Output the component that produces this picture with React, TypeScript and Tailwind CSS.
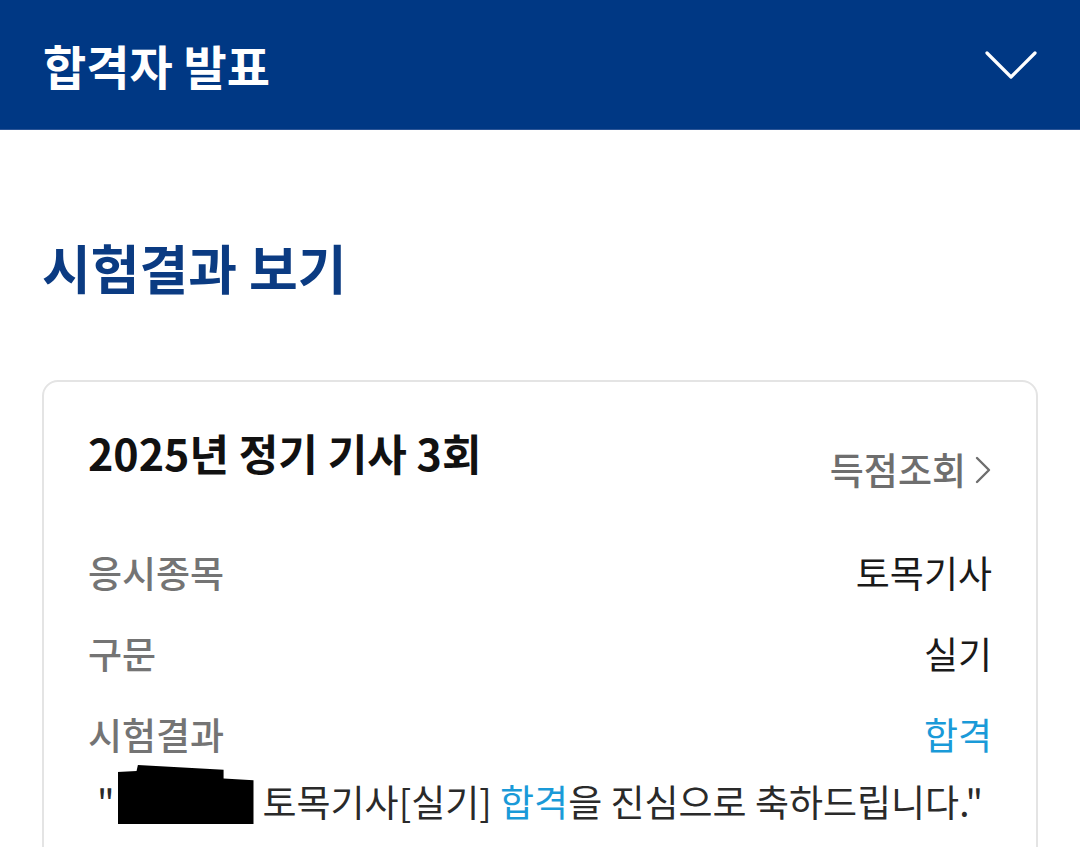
const FONT = "font-['Noto_Sans_CJK_KR','Noto_Sans',sans-serif]";

const Row = ({ label, value, blue }: { label: string; value: string; blue?: boolean }) => (
  <div className="flex h-[81px] items-center justify-between">
    <span className="text-[37px] font-medium text-[#747474]">{label}</span>
    <span className={`text-[37px] ${blue ? "text-[#1a9ad8]" : "text-[#1a1a1a]"}`}>{value}</span>
  </div>
);

export default function App() {
  return (
    <div className={`h-[847px] w-[1080px] overflow-hidden bg-white ${FONT}`}>
      <header className="flex h-[130px] items-center justify-between border-b border-[#2c5596] bg-[#003884] pl-[43px] pr-[42px]">
        <h1 className="text-[47px] font-bold leading-none text-white">합격자 발표</h1>
        <svg width="54" height="30" viewBox="0 0 54 30" fill="none">
          <path d="M3 3 L27 27 L51 3" stroke="white" strokeWidth="3.2" strokeLinecap="round" strokeLinejoin="round" />
        </svg>
      </header>

      <div className="px-[42px]">
        <h2 className="pt-[111px] text-[53px] font-bold leading-none text-[#0b3b82]">시험결과 보기</h2>

        <div className="mt-[86px] h-[500px] rounded-[16px] border-2 border-[#e4e4e4] px-[44px] pt-[49px]">
          <div className="flex items-end justify-between">
            <h3 className="text-[43px] font-bold leading-none text-[#111]">2025년 정기 기사 3회</h3>
            <button className="-mb-[14px] flex items-center gap-[8px] text-[37px] font-medium leading-none text-[#6e6e6e]">
              득점조회
              <svg width="18" height="30" viewBox="0 0 18 30" fill="none">
                <path d="M3 3 L15 15 L3 27" stroke="#6e6e6e" strokeWidth="2.4" strokeLinecap="round" strokeLinejoin="round" />
              </svg>
            </button>
          </div>

          <div className="mt-[58px]">
            <Row label="응시종목" value="토목기사" />
            <Row label="구문" value="실기" />
            <Row label="시험결과" value="합격" blue />
          </div>

          <p className="-mt-[3px] flex items-center justify-center whitespace-nowrap text-[37px] leading-none text-[#2a2a2a]">
            <span>"</span>
            <span className="ml-[3px] mr-[9px] inline-block h-[59px] w-[136px] -translate-y-[7px] bg-black [clip-path:polygon(15%_0,78%_8%,78%_23%,100%_26%,100%_100%,0_100%,0_12%,14%_10%)]" />
            토목기사[실기]&nbsp;<span className="text-[#1a9ad8]">합격</span>을 진심으로 축하드립니다."
          </p>
        </div>
      </div>
    </div>
  );
}
